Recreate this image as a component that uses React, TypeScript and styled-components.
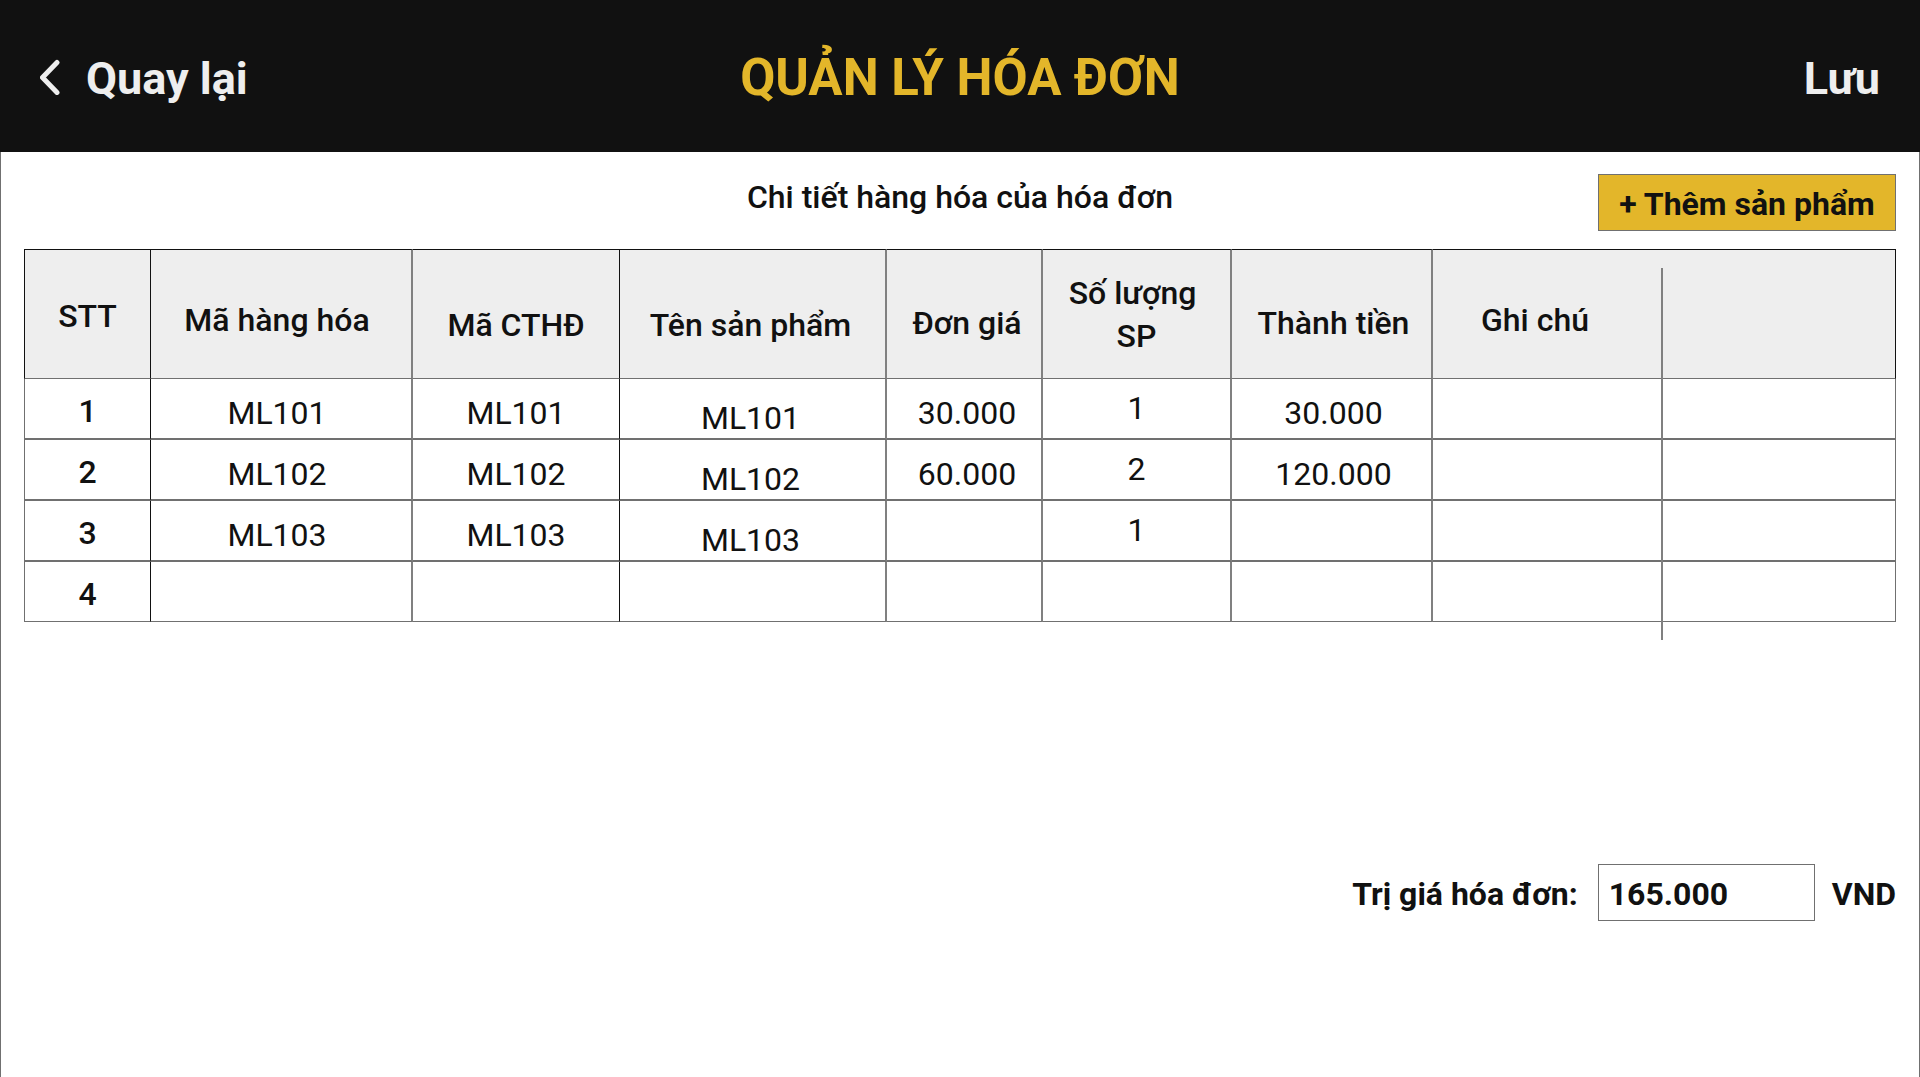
import React, { useState } from "react";
import styled, { createGlobalStyle } from "styled-components";

const color = {
  ink: "#111111",
  paper: "#ffffff",
  light: "#eeeeee",
  gold: "#e3b62a",
  line: "#707070",
  rule: "#808080",
};

const GlobalStyle = createGlobalStyle`
  *, *::before, *::after { box-sizing: border-box; }
  body {
    margin: 0;
    background: ${color.paper};
    color: ${color.ink};
    font-family: Roboto, "Noto Sans", sans-serif;
    font-size: 32px;
    line-height: 40px;
  }
  button, input { font: inherit; color: inherit; border-radius: 0; }
`;

const Page = styled.div`
  display: flex;
  flex-direction: column;
  min-height: 100vh;
`;

const TopBar = styled.header`
  display: grid;
  grid-template-columns: 1fr auto 1fr;
  align-items: center;
  height: 152px;
  padding: 4px 40px 0;
  background: ${color.ink};
`;

const BarButton = styled.button<{ $end?: boolean }>`
  display: flex;
  align-items: center;
  gap: 24px;
  justify-self: ${(p) => (p.$end ? "end" : "start")};
  padding: 2px 0 0;
  border: 0;
  background: none;
  color: ${color.light};
  font-size: 45px;
  font-weight: 700;
  line-height: 56px;
  cursor: pointer;
`;

const BackIcon = styled.svg`
  width: 22px;
  height: 36px;
  margin-bottom: 4px;
`;

const Title = styled.h1`
  margin: 0;
  color: ${color.gold};
  font-size: 51px;
  font-weight: 700;
  line-height: 60px;
`;

const Content = styled.main`
  flex: 1;
  padding: 22px 23px;
  border: solid ${color.line};
  border-width: 0 1px;
`;

const SectionHead = styled.div`
  display: grid;
  grid-template-columns: 1fr auto 1fr;
  align-items: start;
  margin-bottom: 18px;
`;

const SectionTitle = styled.h2`
  grid-column: 2;
  margin: 0;
  padding-top: 3px;
  font-size: 32px;
  font-weight: 500;
`;

const AddButton = styled.button`
  justify-self: end;
  min-width: 298px;
  height: 57px;
  padding: 2px 20px 0;
  border: 1px solid ${color.line};
  background: ${color.gold};
  font-weight: 700;
  cursor: pointer;
`;

type Rule = "thin" | "wide" | "none";

interface Column {
  id: string;
  label: string;
  share: number;
  rule: Rule;
  headTop: number;
  cellTop: number;
  startSpace?: number;
  endSpace?: number;
}

const columns: Column[] = [
  { id: "no", label: "STT", share: 127, rule: "thin", headTop: 45, cellTop: 12 },
  { id: "item", label: "Mã hàng hóa", share: 262, rule: "wide", headTop: 49, cellTop: 14, endSpace: 8 },
  { id: "detail", label: "Mã CTHĐ", share: 207, rule: "thin", headTop: 54, cellTop: 14 },
  { id: "name", label: "Tên sản phẩm", share: 267, rule: "wide", headTop: 54, cellTop: 19, endSpace: 4 },
  { id: "price", label: "Đơn giá", share: 156, rule: "wide", headTop: 52, cellTop: 14, startSpace: 6 },
  { id: "qty", label: "Số lượng SP", share: 189, rule: "wide", headTop: 22, cellTop: 9 },
  { id: "amount", label: "Thành tiền", share: 201, rule: "wide", headTop: 52, cellTop: 14, startSpace: 4 },
  { id: "note", label: "Ghi chú", share: 230, rule: "none", headTop: 49, cellTop: 14, endSpace: 26 },
  { id: "extra", label: "", share: 233, rule: "none", headTop: 49, cellTop: 14 },
];

const totalShare = columns.reduce((sum, c) => sum + c.share, 0);
const lastShare = columns[columns.length - 1].share;

const rows: Record<string, string>[] = [
  { no: "1", item: "ML101", detail: "ML101", name: "ML101", price: "30.000", qty: "1", amount: "30.000" },
  { no: "2", item: "ML102", detail: "ML102", name: "ML102", price: "60.000", qty: "2", amount: "120.000" },
  { no: "3", item: "ML103", detail: "ML103", name: "ML103", qty: "1" },
  { no: "4" },
];

const ruleBorder = {
  thin: `1px solid ${color.ink}`,
  wide: `2px solid ${color.rule}`,
  none: "0",
};

const TableFrame = styled.div`
  position: relative;
`;

/* Divider of the last column: it starts below the table's top and runs past its foot. */
const LastDivider = styled.div`
  position: absolute;
  top: 19px;
  bottom: -18px;
  right: ${(lastShare / totalShare) * 100}%;
  width: 2px;
  background: ${color.rule};
`;

const Table = styled.table`
  width: 100%;
  table-layout: fixed;
  border-collapse: separate;
  border-spacing: 0;
`;

const Col = styled.col<{ $share: number }>`
  width: ${(p) => (p.$share / totalShare) * 100}%;
`;

interface CellProps {
  $rule: Rule;
  $top: number;
  $start?: number;
  $end?: number;
}

const HeadCell = styled.th<CellProps>`
  height: 130px;
  padding: ${(p) => p.$top}px ${(p) => p.$end ?? 0}px 0 ${(p) => p.$start ?? 0}px;
  border-top: 1px solid ${color.ink};
  border-bottom: 1px solid ${color.line};
  border-right: ${(p) => ruleBorder[p.$rule]};
  background: ${color.light};
  font-weight: 500;
  line-height: 43px;
  text-align: center;
  vertical-align: top;
  &:first-child { border-left: 1px solid ${color.ink}; }
  &:last-child { border-right: 1px solid ${color.ink}; }
`;

const Cell = styled.td<CellProps & { $strong: boolean }>`
  height: 61px;
  padding: ${(p) => p.$top}px ${(p) => p.$end ?? 0}px 0 ${(p) => p.$start ?? 0}px;
  border-bottom: 2px solid ${color.line};
  border-right: ${(p) => ruleBorder[p.$rule]};
  font-weight: ${(p) => (p.$strong ? 500 : 400)};
  text-align: center;
  vertical-align: top;
  &:first-child { border-left: 1px solid ${color.line}; }
  &:last-child { border-right: 1px solid ${color.line}; }
  tr:last-child > & { height: 60px; border-bottom-width: 1px; }
`;

const HeadLabel = styled.span`
  display: block;
  max-width: 150px;
  margin: 0 auto;
  white-space: break-spaces;
`;

const TotalRow = styled.div`
  display: flex;
  justify-content: flex-end;
  align-items: center;
  margin-top: 242px;
  font-weight: 700;
`;

const TotalLabel = styled.label`
  padding-top: 2px;
`;

const Currency = styled.span`
  padding-top: 2px;
`;

const TotalInput = styled.input`
  width: 217px;
  height: 57px;
  margin: 0 17px 0 20px;
  padding: 2px 10px 0;
  border: 1px solid ${color.line};
  background: ${color.paper};
  outline: 0;
`;

export default function App() {
  const [total, setTotal] = useState("165.000");
  return (
    <Page>
      <GlobalStyle />
      <TopBar>
        <BarButton type="button">
          <BackIcon viewBox="0 0 22 36" fill="none" stroke="currentColor" strokeWidth="5" strokeLinecap="round" strokeLinejoin="round" aria-hidden="true">
            <path d="M17 3.5 2.5 18.5 17 33.5" />
          </BackIcon>
          Quay lại
        </BarButton>
        <Title>QUẢN LÝ HÓA ĐƠN</Title>
        <BarButton type="button" $end>Lưu</BarButton>
      </TopBar>
      <Content>
        <SectionHead>
          <SectionTitle>Chi tiết hàng hóa của hóa đơn</SectionTitle>
          <AddButton type="button">+ Thêm sản phẩm</AddButton>
        </SectionHead>
        <TableFrame>
          <Table>
            <colgroup>
              {columns.map((c) => <Col key={c.id} $share={c.share} />)}
            </colgroup>
            <thead>
              <tr>
                {columns.map((c) => (
                  <HeadCell key={c.id} scope="col" $rule={c.rule} $top={c.headTop} $start={c.startSpace} $end={c.endSpace}>
                    {c.id === "qty" ? <HeadLabel>{c.label}</HeadLabel> : c.label}
                  </HeadCell>
                ))}
              </tr>
            </thead>
            <tbody>
              {rows.map((row) => (
                <tr key={row.no}>
                  {columns.map((c) => (
                    <Cell key={c.id} $rule={c.rule} $top={c.cellTop} $start={c.startSpace} $end={c.endSpace} $strong={c.id === "no"}>
                      {row[c.id]}
                    </Cell>
                  ))}
                </tr>
              ))}
            </tbody>
          </Table>
          <LastDivider />
        </TableFrame>
        <TotalRow>
          <TotalLabel htmlFor="total">Trị giá hóa đơn:</TotalLabel>
          <TotalInput id="total" value={total} onChange={(e) => setTotal(e.target.value)} />
          <Currency>VND</Currency>
        </TotalRow>
      </Content>
    </Page>
  );
}
